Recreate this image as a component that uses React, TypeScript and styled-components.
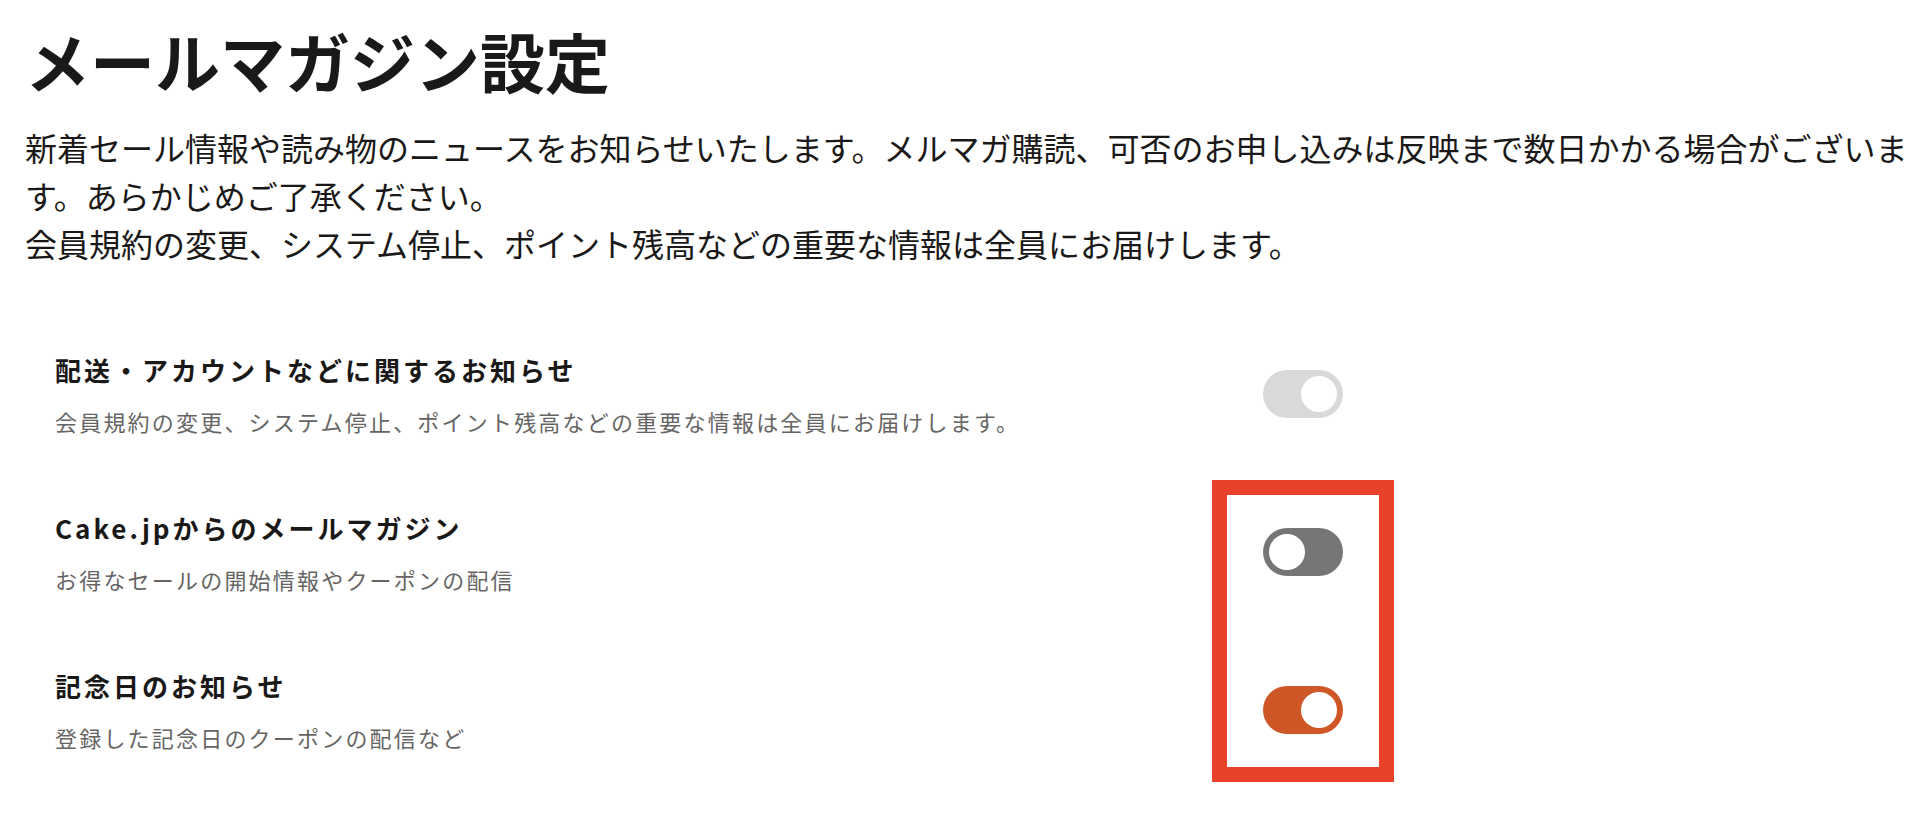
import React from "react";
import styled, { createGlobalStyle } from "styled-components";

const GlobalStyle = createGlobalStyle`
    body {
        margin: 0;
        background: #ffffff;
        font-family: "Noto Sans CJK JP", "Noto Sans", sans-serif;
        color: #1b1918;
    }
`

type Tone = "locked" | "off" | "on";

interface Setting {
    title: string;
    note: string;
    tone: Tone;
}

const settings: Setting[] = [
    {
        title: "配送・アカウントなどに関するお知らせ",
        note: "会員規約の変更、システム停止、ポイント残高などの重要な情報は全員にお届けします。",
        tone: "locked"
    },
    {
        title: "Cake.jpからのメールマガジン",
        note: "お得なセールの開始情報やクーポンの配信",
        tone: "off"
    },
    {
        title: "記念日のお知らせ",
        note: "登録した記念日のクーポンの配信など",
        tone: "on"
    }
];

const trackColors: Record<Tone, string> = {
    locked: "#dad9d7",
    off: "#777674",
    on: "#cf5626"
};

const Page = styled.main`
    padding: 17px 0 0 25px;
    width: 1930px;
    box-sizing: border-box;
`

const Title = styled.h1`
    margin: 0;
    font-size: 65px;
    line-height: 86px;
    font-weight: 700;
    color: #1b1918;
`

const Lead = styled.p`
    margin: 20px 0 0;
    font-size: 32px;
    line-height: 48px;
    font-weight: 400;
    color: #1b1918;
`

const List = styled.section`
    position: relative;
    margin-top: 48px;
    padding-left: 30px;
    width: 1318px;
    box-sizing: border-box;
`

const Row = styled.div`
    display: flex;
    align-items: center;
    justify-content: space-between;
    padding: 35px 0;
`

const RowText = styled.div`
    display: flex;
    flex-direction: column;
    gap: 16px;
`

const RowTitle = styled.h2`
    margin: 0;
    font-size: 26px;
    line-height: 39px;
    font-weight: 700;
    letter-spacing: 3px;
    color: #1b1918;
`

const RowNote = styled.p`
    margin: 0;
    font-size: 22px;
    line-height: 33px;
    letter-spacing: 0.1em;
    color: #666564;
`

const Toggle = styled.span<{ $tone: Tone }>`
    position: relative;
    flex: none;
    width: 80px;
    height: 48px;
    border-radius: 24px;
    background: ${({ $tone }) => trackColors[$tone]};
    &::after {
        content: "";
        position: absolute;
        top: 6px;
        left: ${({ $tone }) => ($tone === "off" ? "6px" : "38px")};
        width: 36px;
        height: 36px;
        border-radius: 50%;
        background: #ffffff;
    }
`

// annotation frame drawn over the last two switches
const Highlight = styled.div`
    position: absolute;
    top: 165px;
    left: 1187px;
    width: 182px;
    height: 302px;
    box-sizing: border-box;
    border: 15px solid #e8432a;
    pointer-events: none;
`

export default function App() {
    return (<>
        <GlobalStyle />
        <Page>
            <Title>メールマガジン設定</Title>
            <Lead>
                新着セール情報や読み物のニュースをお知らせいたします。メルマガ購読、可否のお申し込みは反映まで数日かかる場合がございます。あらかじめご了承ください。
                <br />
                会員規約の変更、システム停止、ポイント残高などの重要な情報は全員にお届けします。
            </Lead>
            <List>
                {settings.map((item) => (
                    <Row key={item.title}>
                        <RowText>
                            <RowTitle>{item.title}</RowTitle>
                            <RowNote>{item.note}</RowNote>
                        </RowText>
                        <Toggle $tone={item.tone} role="switch" aria-checked={item.tone !== "off"} />
                    </Row>
                ))}
                <Highlight />
            </List>
        </Page>
    </>)
}
